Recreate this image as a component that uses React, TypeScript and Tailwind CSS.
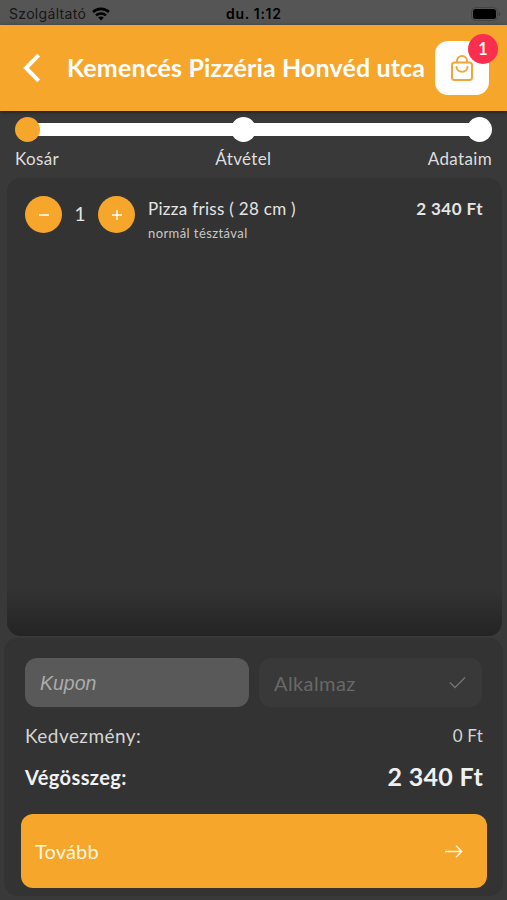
import { useState } from "react"

const steps = ["Kosár", "Átvétel", "Adataim"]

function StatusBar() {
  return (
    <div className="relative flex h-[25px] shrink-0 items-center justify-between bg-[#555555] pr-[6px] pl-[9px] pt-[2px] font-['Inter',sans-serif] text-[14px] text-[#161616]">
      <div className="flex items-center gap-[6px]">
        <span className="tracking-[0.32px]">Szolgáltató</span>
        <svg width="18" height="14" viewBox="0 0 18 14" fill="none" stroke="#000" strokeWidth="2.6">
          <path d="M1 5C5.4.8 12.6.8 17 5" />
          <path d="M4 8.4c2.8-2.6 7.2-2.6 10 0" />
          <path d="M6.2 10.5c1.6-1.5 4-1.5 5.6 0L9 13.4z" fill="#000" stroke="none" />
        </svg>
      </div>
      <span className="absolute left-[226px] top-[3px] font-semibold tracking-[0.7px] text-black">du. 1:12</span>
      <svg width="30" height="14" viewBox="0 0 30 14">
        <rect x=".5" y=".5" width="26" height="13" rx="4" fill="#555" stroke="#444" />
        <rect x="2" y="2" width="23" height="10" rx="2.5" fill="#000" />
        <path d="M28 5v4c1.6-.6 1.6-3.4 0-4z" fill="#383838" />
      </svg>
    </div>
  )
}

function Header({ count }: { count: number }) {
  return (
    <header className="relative z-10 flex h-[86px] shrink-0 items-center bg-[#f6a62b] pl-[22px] pr-[18px] shadow-[0_1px_4px_rgba(0,0,0,0.5)]">
      <svg width="19" height="30" viewBox="0 0 19 30" fill="none" stroke="#fff" strokeWidth="4">
        <path d="M16.7 2.2 4 15l12.7 12.8" />
      </svg>
      <h1 className="ml-[26px] whitespace-nowrap text-[25px] font-bold tracking-[0.14px] text-white">
        Kemencés Pizzéria Honvéd utca
      </h1>
      <button className="relative ml-auto flex size-[54px] items-center justify-center rounded-[13px] bg-white">
        <svg width="24" height="28" viewBox="0 0 24 28" fill="none" stroke="#f0a63c" strokeWidth="2" strokeLinecap="round">
          <rect x="2" y="8.5" width="20" height="17.5" rx="2.5" />
          <path d="M7 8.5V7a5 5 0 0 1 10 0v1.5" />
          <path d="M6.5 13c0 6.2 11 6.2 11 0" />
        </svg>
        <span className="absolute -right-[9px] -top-[7px] flex size-[30px] items-center justify-center rounded-full bg-[#fb2e50] text-[17px] font-semibold text-white">
          {count}
        </span>
      </button>
    </header>
  )
}

function Stepper() {
  return (
    <div className="h-[67px] shrink-0 px-[15px] pt-[6px]">
      <div className="relative flex h-6 items-center justify-between">
        <div className="absolute inset-x-3 h-[13px] bg-white" />
        <span className="relative size-[25px] rounded-full bg-[#f6a62b]" />
        <span className="relative right-[10px] size-[25px] rounded-full bg-white" />
        <span className="relative size-[25px] rounded-full bg-white" />
      </div>
      <div className="mt-[6px] flex justify-between text-[17px] leading-6 tracking-[0.35px] text-[#dedede]">
        {steps.map((step) => (
          <span key={step}>{step}</span>
        ))}
      </div>
    </div>
  )
}

export default function App() {
  const [quantity, setQuantity] = useState(1)

  return (
    <div className="flex h-[900px] w-[507px] flex-col overflow-hidden bg-[#393939] font-['Lato',sans-serif] text-[#e4e4e4]">
      <StatusBar />
      <Header count={quantity} />
      <Stepper />

      {/* Cart items */}
      <main className="relative ml-[7px] mr-[5px] flex h-[458px] shrink-0 items-start overflow-hidden rounded-[14px] bg-[#333333] pl-[18px] pr-[19px] pt-[18px]">
        <div className="flex items-center">
          <button
            onClick={() => setQuantity(Math.max(1, quantity - 1))}
            className="flex size-[37px] items-center justify-center rounded-full bg-[#f6a62b]"
          >
            <svg width="12" height="12" viewBox="0 0 12 12" stroke="#fff" strokeWidth="1.3">
              <path d="M1 6h10" />
            </svg>
          </button>
          <span className="w-[36px] text-center text-[19px]">{quantity}</span>
          <button
            onClick={() => setQuantity(quantity + 1)}
            className="flex size-[37px] items-center justify-center rounded-full bg-[#f6a62b]"
          >
            <svg width="12" height="12" viewBox="0 0 12 12" stroke="#fff" strokeWidth="1.3">
              <path d="M1 6h10M6 1v10" />
            </svg>
          </button>
        </div>
        <div className="ml-[13px]">
          <p className="text-[17px] leading-[26px] tracking-[0.3px]">Pizza friss ( 28 cm )</p>
          <p className="text-[13px] leading-[22px] tracking-[0.42px] text-[#c8c8c8]">normál tésztával</p>
        </div>
        <span className="ml-auto text-[17px] font-bold leading-[26px] tracking-[0.45px]">2 340 Ft</span>
        <div className="absolute inset-x-0 bottom-0 h-[48px] bg-gradient-to-b from-transparent to-[#242424]" />
      </main>

      {/* Summary */}
      <section className="mx-[4px] mt-[2px] flex h-[258px] shrink-0 flex-col rounded-[14px] bg-[#333333] pl-[21px] pr-[20px] pt-[20px]">
        <div className="flex gap-[10px] pr-[1px]">
          <input
            placeholder="Kupon"
            className="h-[49px] w-[224px] rounded-[12px] bg-[#595959] px-[15px] pt-[2px] font-['Liberation_Sans',sans-serif] text-[19.5px] italic outline-none placeholder:text-[#acacac]"
          />
          <button className="flex h-[49px] flex-1 items-center justify-between rounded-[12px] bg-[#393939] pl-[15px] pr-[16px] text-[20px] text-[#686868]">
            <span className="tracking-[0.4px]">Alkalmaz</span>
            <svg width="17" height="13" viewBox="0 0 17 13" fill="none" stroke="#747474" strokeWidth="1.3">
              <path d="m1 6.5 5 5L16 1.5" />
            </svg>
          </button>
        </div>
        <div className="mt-[14px] flex h-[30px] items-center justify-between text-[#d5d5d5]">
          <span className="text-[19px] tracking-[0.45px]">Kedvezmény:</span>
          <span className="text-[17px] tracking-[0.2px]">0 Ft</span>
        </div>
        <div className="mt-[10px] flex h-[32px] items-center justify-between font-bold text-[#f0f0f0]">
          <span className="text-[20px] tracking-[0.4px]">Végösszeg:</span>
          <span className="text-[25px] tracking-[0.3px]">2 340 Ft</span>
        </div>
        <button className="-mx-[4px] mt-[21px] flex h-[74px] items-center justify-between rounded-[12px] bg-[#f6a62b] pl-[14px] pr-[24px] text-[20px] tracking-[0.15px] text-[#fff6df]">
          <span>Tovább</span>
          <svg width="19" height="13" viewBox="0 0 19 13" fill="none" stroke="#fff6df" strokeWidth="1.5">
            <path d="M1 6.5h17M12 .8l5.7 5.7-5.7 5.7" />
          </svg>
        </button>
      </section>
    </div>
  )
}
